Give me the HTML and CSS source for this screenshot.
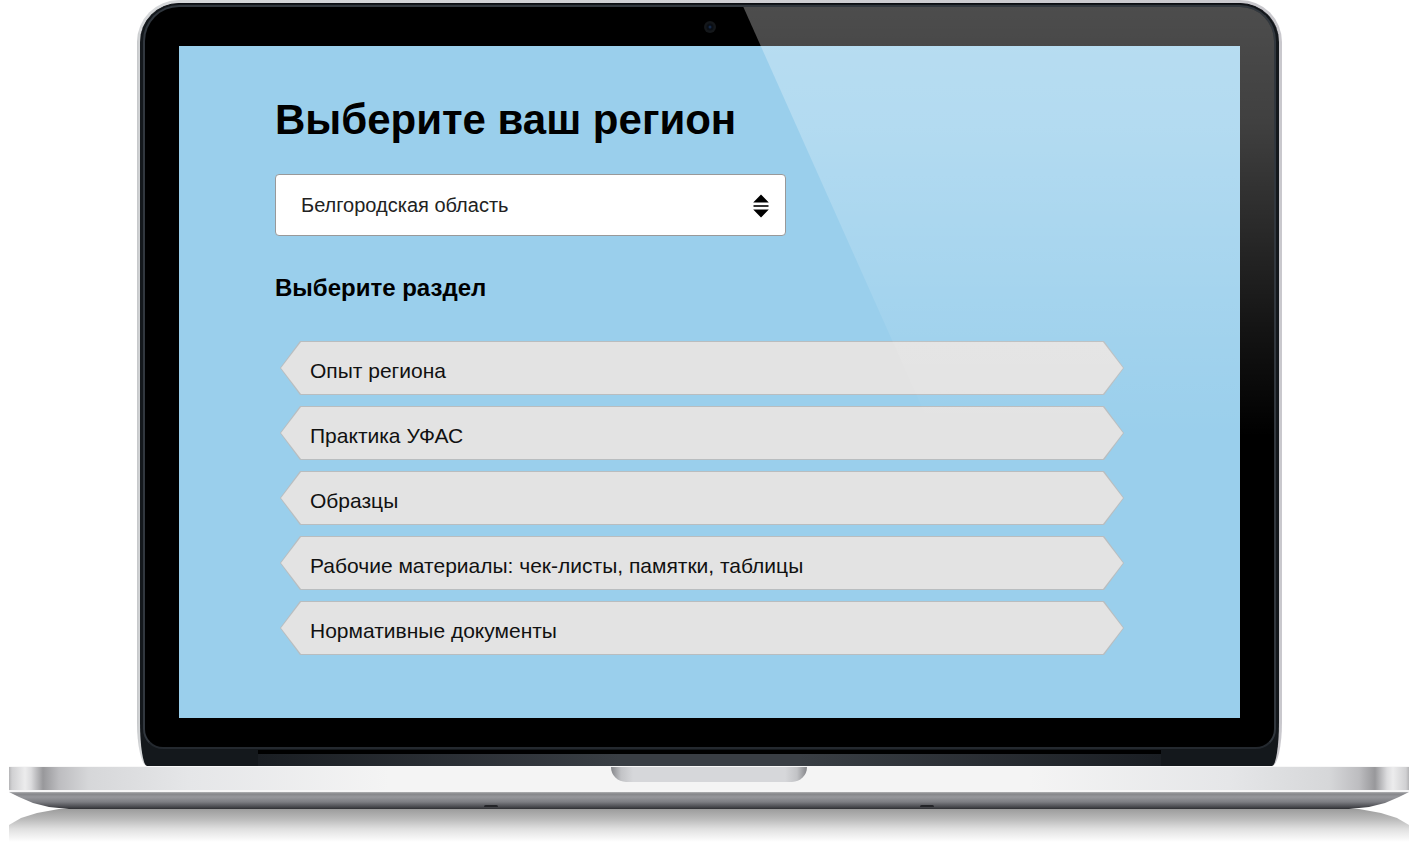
FILE: index.html
```
<!doctype html>
<html lang="ru">
<head>
  <meta charset="utf-8">
  <title>Выберите ваш регион</title>
  <link rel="stylesheet" href="styles.css">
</head>
<body>
  <div class="laptop">
    <div class="lid">
      <div class="shell">
        <div class="bezel">
          <svg class="camera" width="12" height="12" viewBox="0 0 12 12" aria-hidden="true">
            <circle cx="6" cy="6" r="6" fill="#14171a"/>
            <circle cx="6" cy="6" r="3.5" fill="#0a0e14"/>
            <circle cx="6" cy="6" r="1.5" fill="#14294a"/>
          </svg>
          <main class="screen">
            <h1><label for="region">Выберите ваш регион</label></h1>
            <div class="region">
              <select id="region">
                <option>Белгородская область</option>
              </select>
              <svg class="arrows" width="16" height="24" viewBox="0 0 16 24" aria-hidden="true">
                <path d="M8 0.5L15.8 8.5H0.2Z M8 23.5L15.8 15.5H0.2Z"/>
                <path d="M0.5 11.2H15.5V12.8H0.5Z"/>
              </svg>
            </div>
            <h2>Выберите раздел</h2>
            <ul class="sections">
              <li><a href="#"><span>Опыт региона</span></a></li>
              <li><a href="#"><span>Практика УФАС</span></a></li>
              <li><a href="#"><span>Образцы</span></a></li>
              <li><a href="#"><span>Рабочие материалы: чек-листы, памятки, таблицы</span></a></li>
              <li><a href="#"><span>Нормативные документы</span></a></li>
            </ul>
          </main>
          <div class="glare"></div>
        </div>
        <div class="hinge"><div class="hinge-bar"></div></div>
      </div>
    </div>
    <div class="deck"><div class="notch"></div></div>
    <div class="underside">
      <div class="foot"></div>
      <div class="foot"></div>
    </div>
    <div class="reflection"></div>
  </div>
</body>
</html>
```
FILE: styles.css
```
* {
  box-sizing: border-box;
}
body {
  margin: 0;
  background: #fff;
  color: #111;
  font-family: "Liberation Sans", Arial, sans-serif;
}
.laptop {
  padding: 0 9px;
}

/* lid */
.lid {
  margin: 0 127px 0 128px;
  padding: 3px 3px 0;
  border-radius: 42px 42px 10px 10px / 42px 42px 44px 44px;
  background: linear-gradient(90deg, #c4c6c8, #d6d8da 3px, #cfcfd3 50%, #c9c8cd);
}
.shell {
  padding: 1px 3px 0;
  border-radius: 39px 39px 7px 7px / 39px 39px 44px 44px;
  background: #14181c;
  border-top: 1px solid #0b0d12;
}
.bezel {
  position: relative;
  padding: 14px 34px 29px;
  border: 2px solid #31373e;
  border-bottom-color: #24292f;
  border-radius: 36px 36px 20px 20px;
  background: #000;
}
.camera {
  display: block;
  margin: 0 auto 13px;
}
.screen {
  padding: 49px 114px 63px 96px;
  background: #9acfec;
}
.glare {
  position: absolute;
  top: 0;
  left: 0;
  width: 100%;
  height: 430px;
  border-top-right-radius: 34px;
  background: linear-gradient(rgba(255, 255, 255, .3), rgba(255, 255, 255, .25) 27%, rgba(255, 255, 255, .08) 75%, rgba(255, 255, 255, 0));
  clip-path: polygon(53% 0, 100% 0, 100% 100%, 70% 100%);
  pointer-events: none;
}

/* content */
h1 {
  margin: 0 0 29px;
  font-size: 42px;
  line-height: 50px;
  color: #000;
}
h2 {
  margin: 38px 0 39px;
  font-size: 24px;
  line-height: 28px;
  color: #000;
}
.region {
  position: relative;
  width: 60%;
}
.region select {
  display: block;
  width: 100%;
  height: 62px;
  padding: 0 48px 0 25px;
  border: 1px solid #999;
  border-radius: 4px;
  background: #fff;
  color: #222;
  font: 20px "Liberation Sans", Arial, sans-serif;
  appearance: none;
}
.arrows {
  position: absolute;
  top: 20px;
  right: 17px;
  pointer-events: none;
}
.sections {
  display: grid;
  gap: 11px;
  margin: 0;
  padding: 0 2px 0 5px;
  list-style: none;
}
.sections a,
.sections span {
  display: block;
  clip-path: polygon(20px 0, calc(100% - 20px) 0, 100% 50%, calc(100% - 20px) 100%, 20px 100%, 0 50%);
}
.sections a {
  padding: 1px;
  background: #b9bdbf;
  color: #111;
  font-size: 21px;
  line-height: 24px;
  text-decoration: none;
}
.sections span {
  padding: 17px 29px 11px;
  background: #e3e3e3;
}

/* base */
.hinge {
  height: 17px;
  padding: 1px 115px 0;
}
.hinge-bar {
  height: 16px;
  border-top: 4px solid #000;
  background: linear-gradient(90deg, #1a1e23, #393e44 40%, #393e44 60%, #1a1e23);
}
.deck {
  height: 26px;
  border-top: 1px solid #f8f8f8;
  border-bottom: 2px solid #f6f6f7;
  background: linear-gradient(90deg, #b4b4b6, #d0d0d2 3px, #ececed 16px, #dcdcde 22px, #98989b 34px, #bdbdc0 50px, #d6d7d9 80px, #e5e6e8 180px, #f4f4f4 380px, #f4f4f4 calc(100% - 380px), #e5e6e8 calc(100% - 180px), #d6d7d9 calc(100% - 80px), #bdbdc0 calc(100% - 50px), #98989b calc(100% - 34px), #dcdcde calc(100% - 22px), #ececed calc(100% - 16px), #d0d0d2 calc(100% - 3px), #b4b4b6);
}
.notch {
  width: 196px;
  height: 15px;
  margin: 0 auto;
  border-radius: 0 0 16px 16px;
  background: linear-gradient(90deg, #85868a, #c2c3c6 10px, #d6d7da 22px, #d6d7da calc(100% - 22px), #c2c3c6 calc(100% - 10px), #85868a);
}
.underside {
  display: flex;
  justify-content: center;
  align-items: flex-end;
  gap: 422px;
  height: 17px;
  padding-bottom: 2px;
  background: linear-gradient(#b0b1b4, #85868a 2px, #96979c 5px, #7c7d82 10px, #47484d 15px, #2e2f33);
  clip-path: polygon(0 0, 100% 0, calc(100% - 10px) 5px, calc(100% - 24px) 11px, calc(100% - 40px) 15px, calc(100% - 60px) 100%, 60px 100%, 40px 15px, 24px 11px, 10px 5px);
}
.foot {
  width: 14px;
  height: 2px;
  border-radius: 8px 8px 2px 2px;
  background: #232428;
}
.reflection {
  height: 33px;
  background: linear-gradient(#9c9c9c, #bababa 10px, #e0e0e0 20px, #fff);
  clip-path: polygon(0 16px, 12px 9px, 28px 4px, 50px 0, calc(100% - 50px) 0, calc(100% - 28px) 4px, calc(100% - 12px) 9px, 100% 16px, 100% 100%, 0 100%);
}
```
